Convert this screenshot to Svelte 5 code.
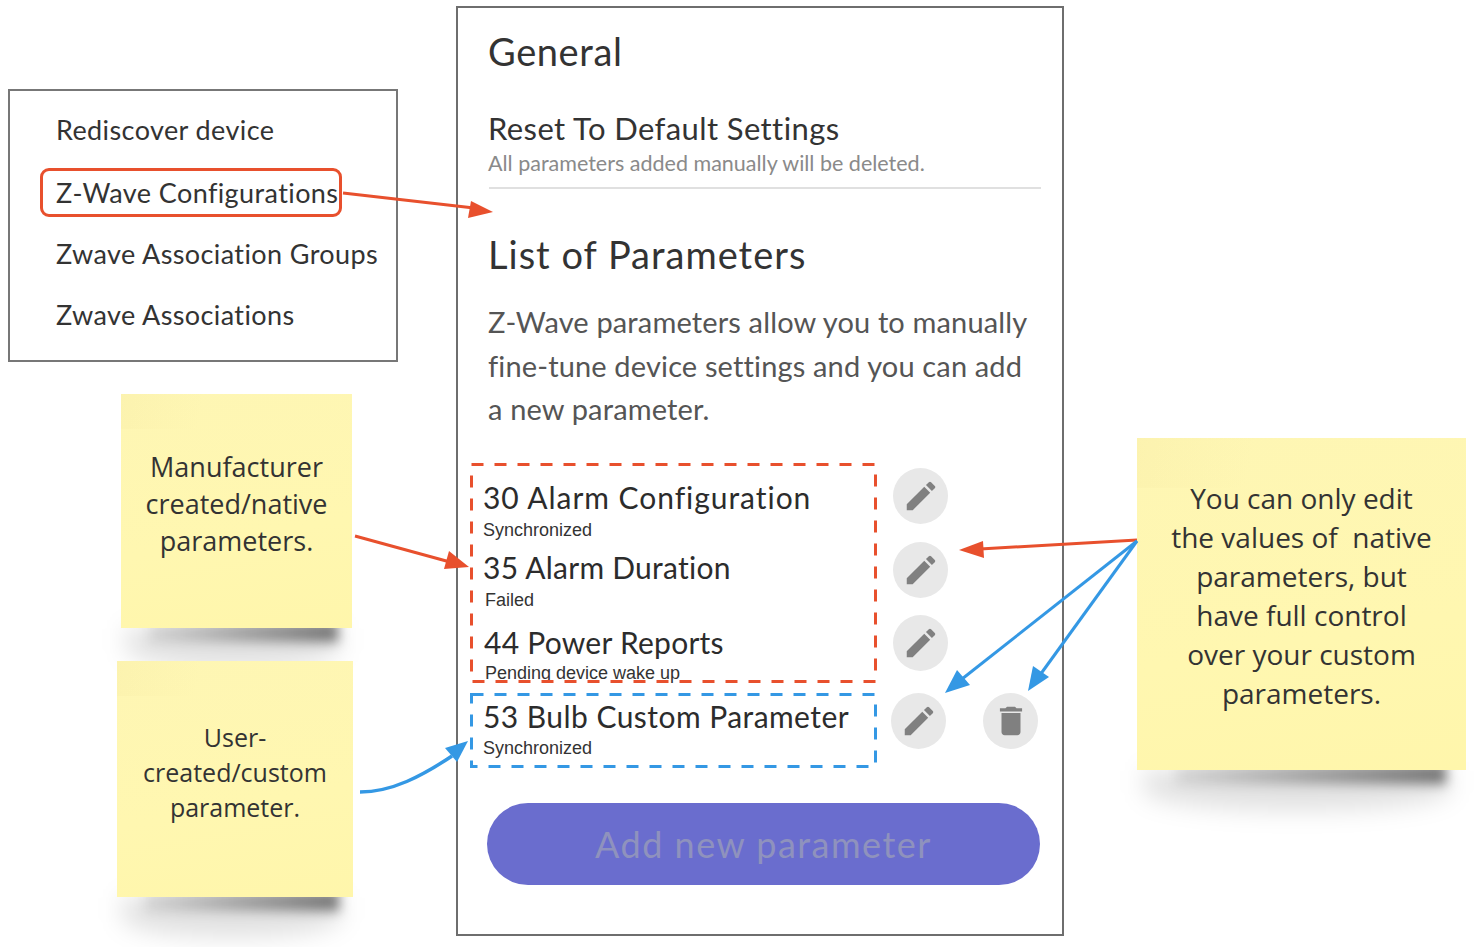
<script>
  const params = [
    { id: 'a', title: '30 Alarm Configuration', sub: 'Synchronized' },
    { id: 'b', title: '35 Alarm Duration', sub: 'Failed' },
    { id: 'c', title: '44 Power Reports', sub: 'Pending device wake up' },
    { id: 'd', title: '53 Bulb Custom Parameter', sub: 'Synchronized', trash: true }
  ];
  const menu = ['Rediscover device', 'Z-Wave Configurations', 'Zwave Association Groups', 'Zwave Associations'];
</script>

<div class="canvas">
  <section class="menu">
    {#each menu as item, i}
      <div class="menu-item" class:active={i === 1}>{item}</div>
    {/each}
  </section>

  <section class="panel">
    <h1>General</h1>
    <h2>Reset To Default Settings</h2>
    <p class="hint">All parameters added manually will be deleted.</p>
    <hr />
    <h1 class="list-title">List of Parameters</h1>
    <p class="intro">Z-Wave parameters allow you to manually<br />fine-tune device settings and you can add<br />a new parameter.</p>

    <div class="params">
      {#each params as p}
        <div class="param {p.id}">
          <div class="param-text">
            <div class="param-title">{p.title}</div>
            <div class="param-sub">{p.sub}</div>
          </div>
          <div class="round">
            <svg viewBox="0 0 24 24" width="38" height="38"><path d="M3 17.25V21h3.75L17.81 9.94l-3.75-3.75L3 17.25zM20.71 7.04a1 1 0 0 0 0-1.41l-2.34-2.34a1 1 0 0 0-1.41 0l-1.83 1.83 3.75 3.75 1.83-1.83z" /></svg>
          </div>
          {#if p.trash}
            <div class="round trash">
              <svg viewBox="0 0 24 24" width="38" height="38"><path d="M6 19c0 1.1.9 2 2 2h8c1.1 0 2-.9 2-2V7H6v12zM19 4h-3.500l-1-1h-5l-1 1H5v2h14V4z" /></svg>
            </div>
          {/if}
        </div>
      {/each}
    </div>

    <button class="add">Add new parameter</button>
  </section>

  <aside class="sticky s1">Manufacturer<br />created/native<br />parameters.</aside>
  <aside class="sticky s2">User-<br />created/custom<br />parameter.</aside>
  <aside class="sticky s3">You can only edit<br />the values of&nbsp; native<br />parameters, but<br />have full control<br />over your custom<br />parameters.</aside>

  <svg class="marks" viewBox="0 0 1479 947" width="1479" height="947">
    <rect x="471.500" y="464.500" width="404" height="217" fill="none" stroke="#e8502d" stroke-width="3" stroke-dasharray="12 11" />
    <rect x="471.500" y="694.500" width="404" height="72" fill="none" stroke="#3498e4" stroke-width="3" stroke-dasharray="12 11" />
    <path d="M343 193 L474 208" stroke="#e8502d" stroke-width="3" fill="none" />
    <polygon points="493,212 468,218 471,201" fill="#e8502d" />
    <path d="M355 536 L450 562" stroke="#e8502d" stroke-width="3" fill="none" />
    <polygon points="469,567 444,569 449,551" fill="#e8502d" />
    <path d="M1137 540 L980 549" stroke="#e8502d" stroke-width="3" fill="none" />
    <polygon points="959,550 983,541 984,558" fill="#e8502d" />
    <path d="M1137 541 L962 679" stroke="#3498e4" stroke-width="3" fill="none" />
    <polygon points="945,693 957,670 970,685" fill="#3498e4" />
    <path d="M1137 541 L1040 675" stroke="#3498e4" stroke-width="3" fill="none" />
    <polygon points="1028,691 1033,666 1049,677" fill="#3498e4" />
    <path d="M360 792 C392 792 422 776 452 756" stroke="#3498e4" stroke-width="3.500" fill="none" />
    <polygon points="468,741 457,762 445,748" fill="#3498e4" />
  </svg>
</div>

<style>
  :global(body) { margin: 0; background: #fff; }
  .canvas {
    position: relative;
    isolation: isolate;
    width: 1479px;
    height: 947px;
    overflow: hidden;
    background: #fff;
    font-family: "Lato", "Noto Sans", sans-serif;
    color: #333;
  }
  .marks { position: absolute; left: 0; top: 0; pointer-events: none; }

  .menu {
    position: absolute;
    left: 8px;
    top: 89px;
    box-sizing: border-box;
    width: 390px;
    height: 273px;
    border: 2px solid #777;
    padding-top: 21px;
    font-size: 27px;
  }
  .menu-item {
    height: 61px;
    line-height: 36px;
    padding-left: 46px;
    letter-spacing: .4px;
    position: relative;
    white-space: nowrap;
  }
  .menu-item:first-child { height: 63px; }
  .menu-item.active::before {
    content: "";
    position: absolute;
    left: 30px;
    top: -7px;
    width: 296px;
    height: 43px;
    border: 3px solid #e8502d;
    border-radius: 9px;
  }

  .panel {
    position: absolute;
    left: 456px;
    top: 6px;
    width: 604px;
    height: 926px;
    border: 2px solid #6e6e6e;
  }
  h1 {
    margin: 0;
    padding: 21px 0 0 30px;
    font-size: 38px;
    line-height: 44px;
    font-weight: 400;
    letter-spacing: .6px;
  }
  h2 {
    margin: 35px 0 0 30px;
    font-size: 31px;
    line-height: 40px;
    font-weight: 400;
    letter-spacing: .4px;
  }
  .hint {
    margin: 1px 0 0 30px;
    font-size: 21.500px;
    line-height: 28px;
    color: #8a8a8a;
  }
  hr {
    margin: 10px 21px 0 31px;
    border: 0;
    border-top: 2px solid #e0e0e0;
  }
  h1.list-title { padding-top: 43px; letter-spacing: 1px; }
  .intro {
    margin: 24px 0 0 30px;
    font-size: 29px;
    line-height: 43.500px;
    letter-spacing: .15px;
    color: #555;
  }

  .params { margin-top: 47px; }
  .param { display: flex; padding-left: 25px; }
  .param-text { width: 410px; }
  .param-title { font-size: 30px; line-height: 38px; color: #2c2c2c; white-space: nowrap; }
  .param-sub { font-family: "Liberation Sans", Arial, sans-serif; font-size: 18px; line-height: 24px; color: #333; white-space: nowrap; }
  .round {
    flex: none;
    width: 55px;
    height: 56px;
    border-radius: 50%;
    background: #e8e8e8;
    display: flex;
    align-items: center;
    justify-content: center;
  }
  .round path { fill: #808080; }
  .round.trash { margin-left: 36px; }

  .param.a { height: 70px; }
  .param.a .round { margin-top: -10px; }
  .param.a .param-title { letter-spacing: .95px; }
  .param.a .param-sub { margin-top: 2px; padding-left: 0; }

  .param.b { height: 75px; }
  .param.b .round { margin-top: -6px; }
  .param.b .param-title { letter-spacing: .25px; }
  .param.b .param-sub { margin-top: 2px; padding-left: 2px; }

  .param.c { height: 74px; }
  .param.c .round { margin-top: -8px; }
  .param.c .param-title { letter-spacing: .25px; padding-left: 1px; }
  .param.c .param-sub { padding-left: 2px; }

  .param.d { height: 74px; }
  .param.d .round { margin-top: -4px; }
  .param.d .round:not(.trash) { margin-left: -2px; }
  .param.d .param-title { letter-spacing: .45px; }
  .param.d .param-sub { margin-top: 1px; }
  .param.d .round.trash { margin-left: 37px; }

  .add {
    display: block;
    margin: 32px 0 0 29px;
    width: 553px;
    height: 82px;
    border: 0;
    border-radius: 41px;
    background: #6a6dce;
    color: #8f92bd;
    font-family: inherit;
    font-size: 36px;
    letter-spacing: 1.500px;
  }

  .sticky {
    position: absolute;
    box-sizing: border-box;
    display: flex;
    align-items: flex-start;
    justify-content: center;
    text-align: center;
    background:
      linear-gradient(100deg, rgba(240, 225, 150, .16), rgba(240, 225, 150, 0) 35%) top left / 100% 15% no-repeat,
      linear-gradient(170deg, #fef6b4 0%, #fff7b0 60%, #fff6ab 100%);
    font-family: "Open Sans", sans-serif;
    color: #333;
  }
  .sticky::after {
    content: "";
    position: absolute;
    z-index: -1;
    left: 12%;
    right: 6%;
    top: calc(100% - 6px);
    height: 20px;
    background: linear-gradient(90deg, rgba(0,0,0,.08), rgba(0,0,0,.3) 50%, rgba(0,0,0,.5));
    filter: blur(6px);
  }
  .sticky::before {
    content: "";
    position: absolute;
    z-index: -1;
    left: 2%;
    right: 5%;
    top: 100%;
    height: 40px;
    border-radius: 0 0 50% 50%;
    background: rgba(0,0,0,.12);
    filter: blur(12px);
  }
  .s1 { left: 121px; top: 394px; width: 231px; height: 234px; padding-top: 54px; font-size: 27px; line-height: 37px; }
  .s2 { left: 117px; top: 661px; width: 236px; height: 236px; padding-top: 59px; font-size: 25px; line-height: 35px; }
  .s3 { left: 1137px; top: 438px; width: 329px; height: 332px; padding-top: 41px; font-size: 28px; line-height: 39px; }
</style>
